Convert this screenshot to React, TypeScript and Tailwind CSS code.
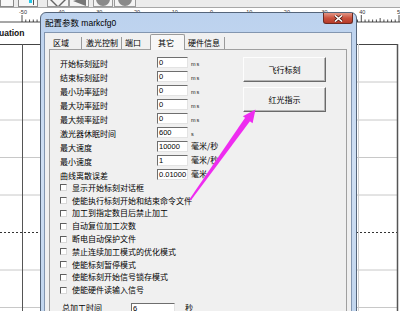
import React from "react";

const rows: [string, string, string][] = [
  ["开始标刻延时", "0", "ms"],
  ["结束标刻延时", "0", "ms"],
  ["最小功率延时", "0", "ms"],
  ["最大功率延时", "0", "ms"],
  ["最大频率延时", "0", "ms"],
  ["激光器休眠时间", "600", "s"],
  ["最大速度", "10000", "毫米/秒"],
  ["最小速度", "1", "毫米/秒"],
  ["曲线离散误差", "0.01000", "毫米"],
];

const checks = [
  "显示开始标刻对话框",
  "使能执行标刻开始和结束命令文件",
  "加工到指定数目后禁止加工",
  "自动复位加工次数",
  "断电自动保护文件",
  "禁止连续加工模式的优化模式",
  "使能标刻暂停模式",
  "使能标刻开始信号锁存模式",
  "使能硬件读输入信号",
];

function Toolbar() {
  return (
    <div className="h-[8px] bg-[#ececec] border-b border-[#a8a8a8] relative">
      <svg width="140" height="8" className="block">
        <rect x="0.5" y="-2" width="13" height="8.5" fill="#f7f7f7" stroke="#8a8a8a" />
        <rect x="18.5" y="-2" width="19" height="8.5" fill="#f7f7f7" stroke="#8a8a8a" />
        <rect x="29" y="0" width="3" height="3" fill="#22c8e8" />
        <rect x="33" y="0" width="1" height="5" fill="#555" />
        <rect x="47.5" y="-2" width="21" height="8.5" fill="#f4f4f4" stroke="#9a9a9a" />
        <path d="M50 0 L56 6 L58 6 L52 0 Z" fill="#666" />
        <path d="M66 0 L60 6 L58 6 L64 0 Z" fill="#666" />
        <rect x="69.5" y="-2" width="19" height="8.5" fill="#f4f4f4" stroke="#9a9a9a" />
        <path d="M73 1 L86 -3 L86 6 Z" fill="#777" />
        <rect x="93.5" y="-2" width="19" height="8.5" fill="#f4f4f4" stroke="#9a9a9a" />
        <circle cx="103" cy="-1" r="7" fill="#8a8a8a" />
        <rect x="114.5" y="-2" width="21" height="8.5" fill="#f4f4f4" stroke="#9a9a9a" />
        <circle cx="125" cy="-1" r="7" fill="#8a8a8a" />
      </svg>
    </div>
  );
}

function Ruler() {
  const start = 22;
  const step = 3.77;
  const ticks: JSX.Element[] = [];
  for (let i = 0; i <= 100; i++) {
    const x = start + i * step;
    if (x > 400) break;
    const h = i % 10 === 0 ? 7 : i % 5 === 0 ? 4 : 2.5;
    ticks.push(<line key={i} x1={x} x2={x} y1={14 - h} y2={14} stroke="#222" strokeWidth="0.8" />);
  }
  const labels = ["-50", "-40", "-30", "-20", "-10", "0", "10", "20", "30", "40", "50"];
  return (
    <div className="h-[15px] bg-white">
      <svg width="400" height="15" className="block">
        <line x1="0" x2="400" y1="14" y2="14" stroke="#222" strokeWidth="0.8" />
        {ticks}
        {labels.map((l, k) => (
          <text key={l} x={start + k * 37.7 + 1} y="6" fontSize="5.5" fill="#333" textAnchor="middle" fontFamily="Liberation Sans, sans-serif">
            {l}
          </text>
        ))}
      </svg>
    </div>
  );
}

function Work() {
  const grays = [82, 120, 157.5, 195, 270, 307.5];
  return (
    <div className="relative flex-1 bg-white">
      <svg width="400" height="288" className="absolute inset-0 block">
        {grays.map((y) => (
          <line key={y} x1="0" x2="398" y1={y - 23} y2={y - 23} stroke="#c8c8c8" strokeWidth="1" />
        ))}
        <line x1="0" x2="398" y1={232.5 - 23} y2={232.5 - 23} stroke="#333" strokeWidth="1" strokeDasharray="2 2" />
        <line x1="0" x2="398" y1={44.5 - 23} y2={44.5 - 23} stroke="#444" strokeWidth="1" />
        <line x1="22.5" x2="22.5" y1={44 - 23} y2="288" stroke="#555" strokeWidth="1" />
        <line x1="358.5" x2="358.5" y1={44 - 23} y2="288" stroke="#d0d0d0" strokeWidth="1" />
        <line x1="397.5" x2="397.5" y1={44 - 23} y2="288" stroke="#555" strokeWidth="1.5" />
      </svg>
      <div className="relative pt-[5px] text-[8.5px] leading-[10px] font-bold text-[#111] font-['Liberation_Sans',sans-serif] -ml-[1px]">
        uation
      </div>
    </div>
  );
}

function Input({ value, w = 31 }: { value: string; w?: number }) {
  return (
    <div
      className="h-[11px] bg-white border-t border-l border-t-[#6e6e6e] border-l-[#6e6e6e] border-b border-r border-b-[#e3e3e3] border-r-[#e3e3e3] pl-[1px] flex items-center text-[7.5px] leading-[9px] text-black font-['Liberation_Sans',sans-serif]"
      style={{ width: w }}
    >
      {value}
    </div>
  );
}

function Unit({ u }: { u: string }) {
  if (u === "ms" || u === "s") {
    return (
      <span className="pt-[4px] text-[5.5px] leading-[6px] tracking-[1px] text-[#222] font-['Liberation_Sans',sans-serif]">
        {u}
      </span>
    );
  }
  return <span className="text-[8px] leading-[10px] text-black">{u}</span>;
}

function Dialog() {
  return (
    <div className="absolute left-[40px] top-[12px] w-[317px] h-[300px] rounded-t-[6px] border border-[#55657a] bg-gradient-to-b from-[#bcd2ee] via-[#cfdff3] to-[#c2d6ee] flex flex-col font-['Noto_Sans_CJK_SC','Noto_Sans_CJK_JP',sans-serif]">
      {/* title bar */}
      <div className="relative h-[19px] flex items-center pl-[4px] shrink-0">
        <span className="text-[8.5px] leading-[10px] text-black pt-[1px] font-['Liberation_Sans','Noto_Sans_CJK_SC',sans-serif]">
          配置参数 markcfg0
        </span>
        <div className="absolute right-[3px] top-0 w-[30px] h-[11px] rounded-b-[3px] border border-t-0 border-[#6b2a22] bg-gradient-to-b from-[#e29686] via-[#c9523f] to-[#b73a28] flex items-center justify-center">
          <svg width="9" height="7" viewBox="0 0 9 7">
            <path d="M1 0.5 L8 6.5 M8 0.5 L1 6.5" stroke="#4a1a14" strokeWidth="3" />
            <path d="M1 0.5 L8 6.5 M8 0.5 L1 6.5" stroke="#ffffff" strokeWidth="1.6" />
          </svg>
        </div>
      </div>
      {/* client */}
      <div className="flex-1 ml-[3px] mr-[4px] border border-[#8396b0] bg-[#f0f0f0] px-[4px] flex flex-col">
        {/* tabs */}
        <div className="h-[16px] flex items-end text-[8px] leading-[10px] text-black shrink-0">
          <div className="w-[33px] h-[12px] pl-[4px] border-r border-[#9a9a9a] flex items-center">区域</div>
          <div className="w-[40px] h-[12px] pl-[4px] border-r border-[#9a9a9a] flex items-center">激光控制</div>
          <div className="w-[28px] h-[12px] pl-[3px] flex items-center">端口</div>
          <div className="w-[35px] h-[16px] pl-[7px] border border-b-0 border-[#9a9a9a] bg-[#f7f7f7] rounded-t-[2px] flex items-center -mb-[1px] relative z-10">
            其它
          </div>
          <div className="w-[40px] h-[12px] pl-[3px] border-r border-[#9a9a9a] flex items-center">硬件信息</div>
        </div>
        {/* panel */}
        <div className="flex-1 border border-b-0 border-[#a0a0a0] bg-[#f0f0f0] pl-[10px] pt-[7px] flex">
          <div className="w-[183px] flex flex-col">
            {rows.map(([label, val, unit]) => (
              <div key={label} className="h-[14px] flex items-start">
                <span className="w-[97px] pt-[2px] text-[8px] leading-[10px] text-black whitespace-nowrap">{label}</span>
                <Input value={val} />
                <span className="ml-[3px] flex">
                  <Unit u={unit} />
                </span>
              </div>
            ))}
            <div className="flex flex-col -mt-[1.5px]">
              {checks.map((c) => (
                <div key={c} className="h-[12.8px] flex items-center gap-[5px]">
                  <div className="w-[7px] h-[7px] bg-white border-t border-l border-t-[#5e5e5e] border-l-[#5e5e5e] border-b border-r border-b-[#d8d8d8] border-r-[#d8d8d8]" />
                  <span className="text-[8px] leading-[10px] text-black whitespace-nowrap">{c}</span>
                </div>
              ))}
            </div>
            <div className="mt-[5px] h-[13px] flex items-center pl-[2px]">
              <span className="w-[69px] text-[8px] leading-[10px] text-black">总加工时间</span>
              <Input value="6" w={44} />
              <span className="ml-[10px] text-[8px] leading-[10px] text-black">秒</span>
            </div>
          </div>
          <div className="flex flex-col gap-[5px]">
            <div className="w-[83px] h-[25px] flex items-center justify-center bg-[#f0f0f0] border border-t-[#fdfdfd] border-l-[#fdfdfd] border-r-[#6a6a6a] border-b-[#6a6a6a] shadow-[inset_-1px_-1px_0_#b4b4b4] text-[8px] leading-[10px] text-black">
              飞行标刻
            </div>
            <div className="w-[83px] h-[25px] flex items-center justify-center bg-[#f0f0f0] border border-t-[#fdfdfd] border-l-[#fdfdfd] border-r-[#6a6a6a] border-b-[#6a6a6a] shadow-[inset_-1px_-1px_0_#b4b4b4] text-[8px] leading-[10px] text-black">
              红光指示
            </div>
          </div>
        </div>
      </div>
    </div>
  );
}

function Arrow() {
  return (
    <svg width="400" height="311" className="absolute inset-0 pointer-events-none">
      <polygon points="189.3,199.6 190.8,200.4 250.5,120.6 245.6,117.1" fill="#ee2cf0" />
      <polygon points="255.5,109.5 252.6,123.2 242.9,116.3" fill="#ee2cf0" />
    </svg>
  );
}

export default function App() {
  return (
    <div className="relative w-[400px] h-[311px] overflow-hidden bg-white">
      <div className="flex flex-col h-full">
        <Toolbar />
        <Ruler />
        <Work />
      </div>
      <Dialog />
      <Arrow />
    </div>
  );
}
